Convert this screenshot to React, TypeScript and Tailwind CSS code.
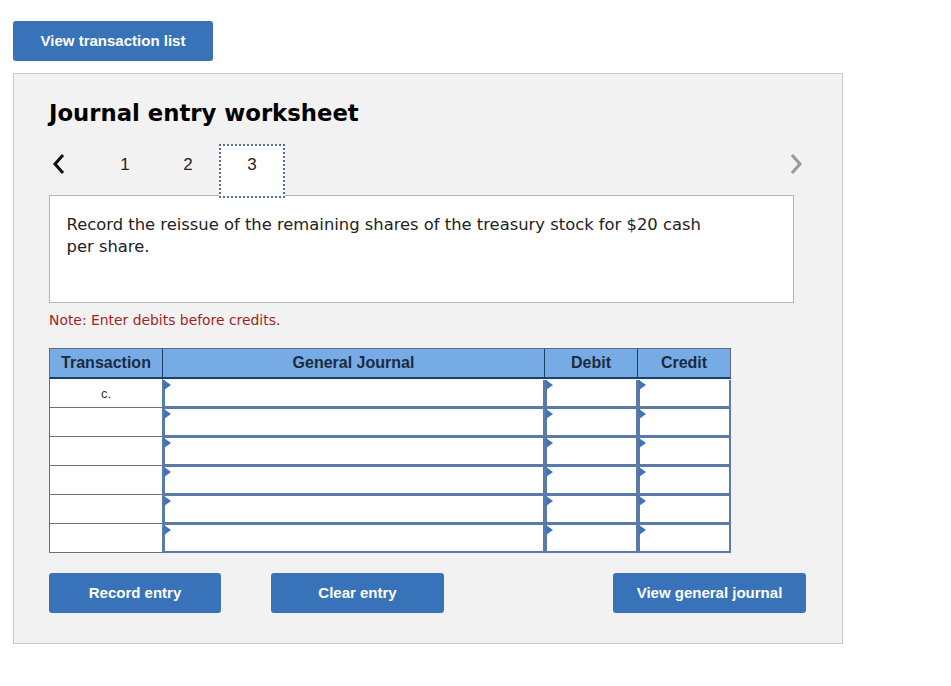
const ROWS = ['c.', '', '', '', '', '']

function Cell({ last }: { last: boolean }) {
  return (
    <div className={`relative -ml-[1px] mt-[1px] border-[2px] border-l-[3px] border-t-0 border-[#5a7aa8] bg-white ${last ? 'h-[28px] border-b-[2px]' : '-mb-[1px] h-[29px] border-b-[3px]'}`}>
      <span className="absolute -left-[1px] top-0 h-0 w-0 border-y-[5px] border-l-[7px] border-y-transparent border-l-[#3f75b8]" />
    </div>
  )
}

function Button({ label, className }: { label: string; className: string }) {
  return (
    <button className={`h-10 rounded-[3px] bg-[#3873b9] font-['Liberation_Sans',sans-serif] text-[15px] font-bold text-white ${className}`}>
      {label}
    </button>
  )
}

export default function App() {
  return (
    <div className="h-[686px] w-[951px] overflow-hidden bg-white pl-[13px] pt-[21px] font-['DejaVu_Sans',sans-serif]">
      <Button label="View transaction list" className="block w-[200px]" />

      <div className="mt-3 h-[571px] w-[830px] border border-[#c8c8c8] bg-[#f2f2f2] pl-[35px] pt-[22px]">
        <h1 className="text-[22.75px] font-bold leading-[34px] text-black">Journal entry worksheet</h1>

        <div className="mt-[14px] flex h-[51px] w-[757px] items-start font-['Liberation_Sans',sans-serif] text-[17px] text-[#222]">
          <svg width="20" height="24" viewBox="0 0 20 24" className="ml-[1px] mt-2 shrink-0" fill="none">
            <path d="M13 3 L5 12 L13 21" stroke="#111" strokeWidth="3" />
          </svg>
          <span className="ml-[45px] mt-[8px] w-5 text-center">1</span>
          <span className="ml-[43px] mt-[8px] w-5 text-center">2</span>
          <div className="relative ml-[21px] flex h-[54px] w-[66px] justify-center border-2 border-dotted border-[#4f6f9f] bg-white pt-[6px]">3</div>
          <svg width="20" height="24" viewBox="0 0 20 24" className="ml-auto mt-2 shrink-0" fill="none">
            <path d="M6 3 L14 12 L6 21" stroke="#999" strokeWidth="3" />
          </svg>
        </div>

        <div className="h-[108px] w-[745px] border border-[#b5b5b5] bg-white pl-[16.5px] pr-[80px] pt-[18px] text-[16.37px] leading-[22px] text-[#222]">
          Record the reissue of the remaining shares of the treasury stock for $20 cash per share.
        </div>

        <p className="mt-[8px] text-[13.9px] leading-[18px] text-[#a31f1f]">Note: Enter debits before credits.</p>

        <div className="mt-[19px] w-[682px] font-['Liberation_Sans',sans-serif]">
          <div className="grid h-[31px] grid-cols-[113px_382px_93px_92px] border border-b-2 border-[#5d6b7d] border-b-[#1d3f6e] bg-[#76abe6] text-center text-[16px] font-bold leading-[27px] text-[#1b2b40]">
            <div className="border-r border-[#1d3f6e]">Transaction</div>
            <div className="border-r border-[#1d3f6e]">General Journal</div>
            <div className="border-r border-[#1d3f6e]">Debit</div>
            <div>Credit</div>
          </div>
          {ROWS.map((row, i) => (
            <div key={i} className="grid grid-cols-[114px_382px_93px_93px]">
              <div className="h-[29px] border border-t-0 border-[#6f6f6f] bg-white text-center text-[13px] leading-[29px] text-[#333]">
                {row}
              </div>
              <Cell last={i === ROWS.length - 1} />
              <Cell last={i === ROWS.length - 1} />
              <Cell last={i === ROWS.length - 1} />
            </div>
          ))}
        </div>

        <div className="mt-5 flex w-[757px]">
          <Button label="Record entry" className="w-[172px]" />
          <Button label="Clear entry" className="ml-[50px] w-[173px]" />
          <Button label="View general journal" className="ml-auto w-[193px]" />
        </div>
      </div>
    </div>
  )
}
